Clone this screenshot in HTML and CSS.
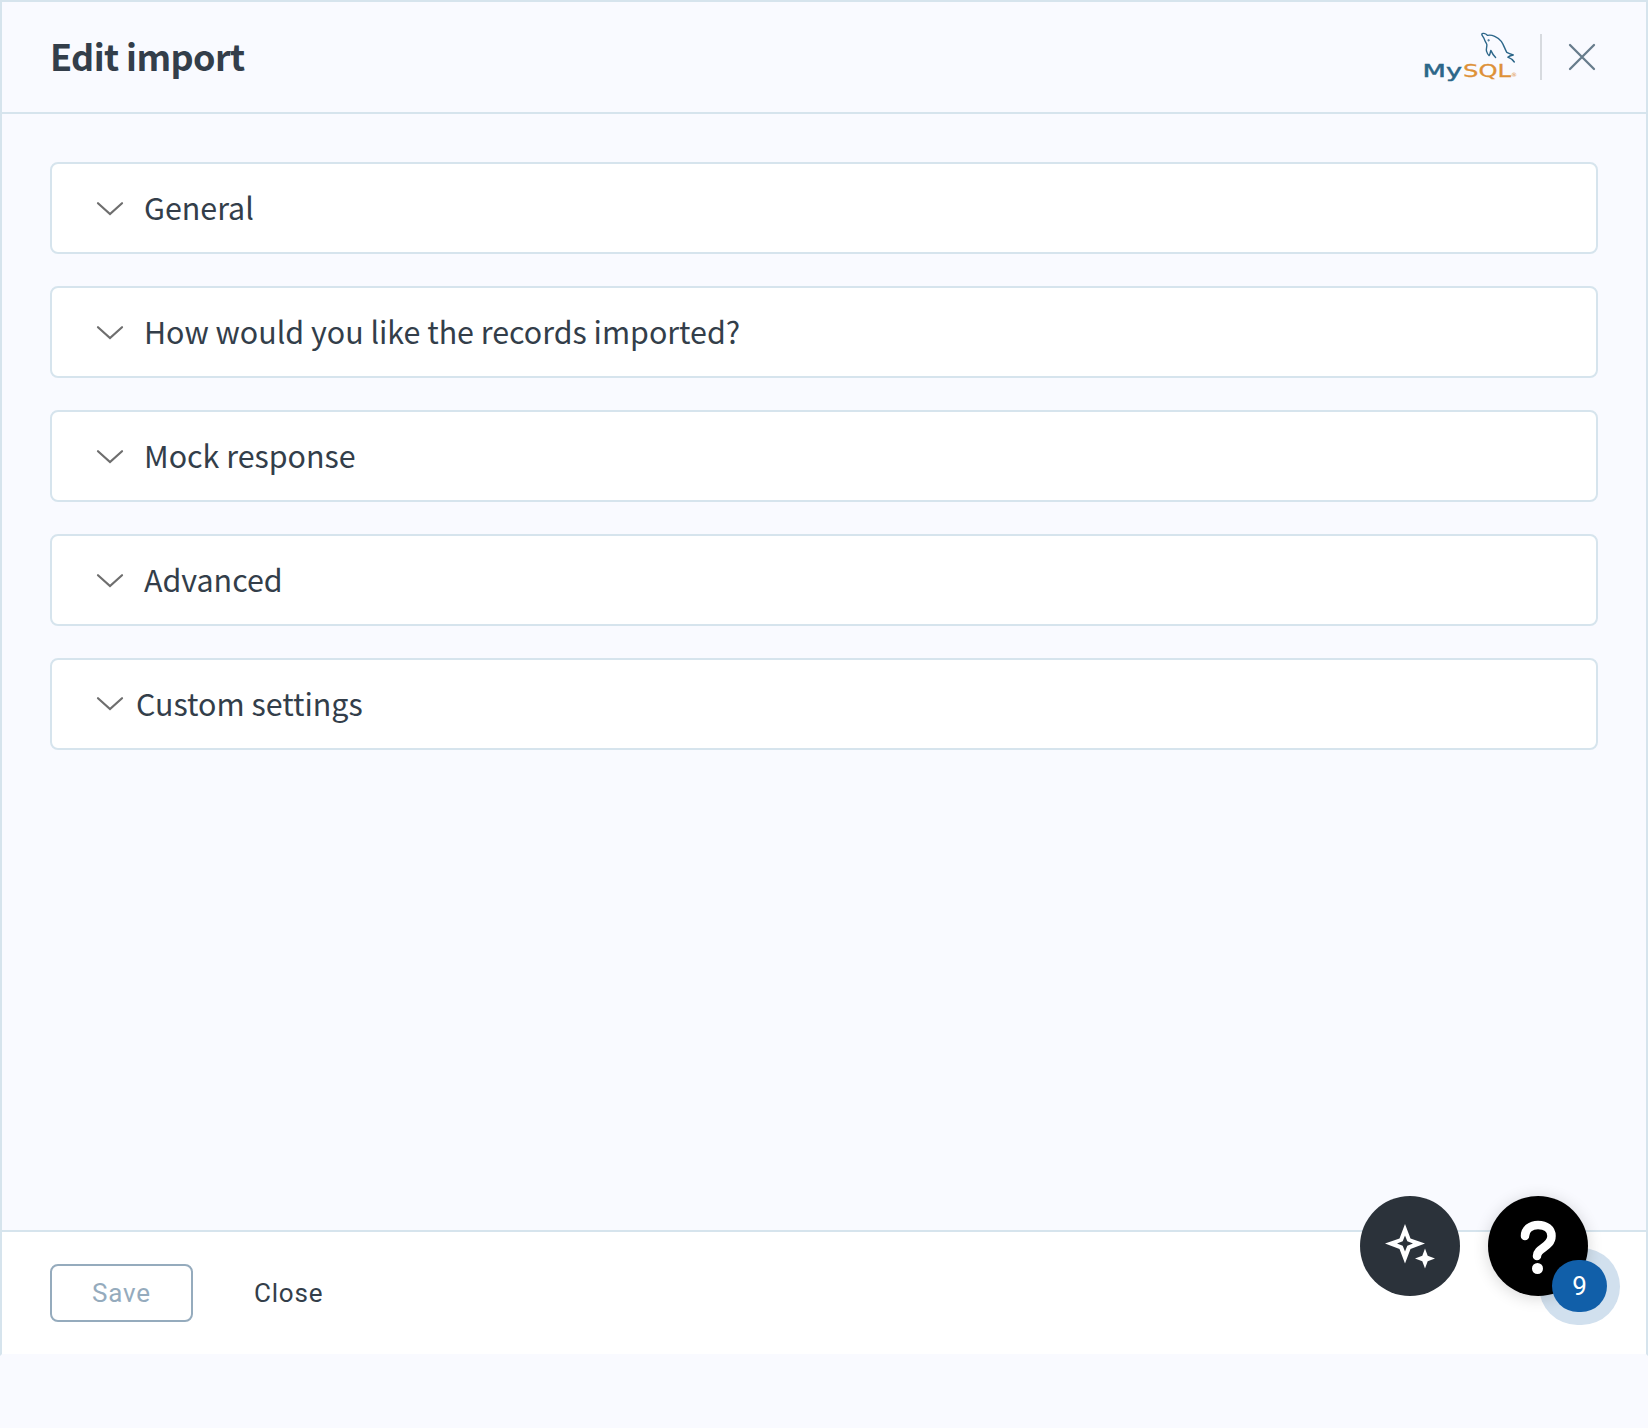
FILE: index.html
```html
<!DOCTYPE html>
<html lang="en">
<head>
<meta charset="utf-8">
<title>Edit import</title>
<link rel="stylesheet" href="styles.css">
</head>
<body>
<svg width="0" height="0" class="defs" aria-hidden="true">
  <symbol id="chevron" viewBox="0 0 28 16"><path d="M2 2.2 14 13l12-10.8" fill="none" stroke="currentColor" stroke-width="2.2" stroke-linecap="round"/></symbol>
</svg>
<div class="drawer">
  <header class="header">
    <h1 class="title">Edit import</h1>
    <svg class="logo" viewBox="0 0 96 52" role="img" aria-label="MySQL">
      <g transform="translate(-.7 2.500)" fill="none" stroke="#2c6689" stroke-width="1.4" stroke-linejoin="round" stroke-linecap="round">
        <path d="M91 28.500c-1.500-2-3.500-3.700-6.500-4.800 1.200-1.200 3.200-1.700 5.500-2.200-2.500-.8-4.500-1.500-6.500-2.600-2-3.500-3-7.500-5.500-11-3.500-4.500-9.500-7-13.700-6-2.500-2.500-5.500-2.500-5.800-1.200 0 1.500 2 3 2.500 5 .5 2 1.800 3 2.500 5.200.5 2.500-1.200 4.500-.2 7 .6 2 1.300 3.500 2.500 4.200 1.200-1.500 1-3 1.700-5.200 1.300 3 2.800 5 4.800 7"/>
        <circle cx="65.300" cy="6.800" r=".4"/>
      </g>
      <text class="logo-my" x="-1.500" y="45.500" textLength="39.5" lengthAdjust="spacingAndGlyphs">My</text>
      <text class="logo-sql" x="39" y="45.500" textLength="48" lengthAdjust="spacingAndGlyphs">SQL</text>
      <text class="logo-mark" x="87" y="45.500">®</text>
    </svg>
    <span class="divider"></span>
    <svg class="close-icon" viewBox="0 0 28 28"><path d="m2 2 24 24M26 2 2 26" stroke="currentColor" stroke-width="2.300" stroke-linecap="round"/></svg>
  </header>
  <main class="content">
    <section class="panel"><svg class="chevron"><use href="#chevron"/></svg><span class="panel-title">General</span></section>
    <section class="panel"><svg class="chevron"><use href="#chevron"/></svg><span class="panel-title">How would you like the records imported?</span></section>
    <section class="panel"><svg class="chevron"><use href="#chevron"/></svg><span class="panel-title">Mock response</span></section>
    <section class="panel"><svg class="chevron"><use href="#chevron"/></svg><span class="panel-title">Advanced</span></section>
    <section class="panel panel-tight"><svg class="chevron"><use href="#chevron"/></svg><span class="panel-title">Custom settings</span></section>
  </main>
  <footer class="footer">
    <button class="button save" disabled>Save</button>
    <button class="button close">Close</button>
  </footer>
</div>
<div class="halo"></div>
<div class="fab assistant">
  <svg viewBox="0 0 100 100"><path fill="#fff" fill-rule="evenodd" d="M45 28 50.500 42.500 65 47.500 50.500 53 45 67.500 39.500 53 25 47.500 39.500 42.500ZM45 39.500 42.700 45.200 37 47.500 42.700 49.800 45 55.500 47.300 49.800 53 47.500 47.300 45.200Z"/><path fill="#fff" d="m65 52.500 2.700 7.300 7.300 2.700-7.300 2.700L65 72.500l-2.700-7.300-7.300-2.700 7.300-2.700Z"/></svg>
</div>
<div class="fab help">
  <svg viewBox="0 0 100 100"><path d="M37 40c0-7 6-11 13-11 8 0 13.500 4 13.500 11 0 11-14.500 12-14.500 20" fill="none" stroke="#fff" stroke-width="8.500" stroke-linecap="round"/><circle cx="49.500" cy="72.500" r="5.500" fill="#fff"/></svg>
</div>
<div class="badge">9</div>
</body>
</html>
```
FILE: styles.css
```css
* { box-sizing: border-box; }
body {
  margin: 0;
  height: 1428px;
  position: relative;
  overflow: hidden;
  background: #f9faff;
  color: #333e4a;
  font-family: "Noto Sans CJK SC", sans-serif;
}
.defs { position: absolute; }
.drawer {
  height: 1356px;
  display: flex;
  flex-direction: column;
  border: 2px solid #d6e4ed;
  border-bottom-color: #f9faff;
}
.header {
  height: 112px;
  flex: none;
  display: flex;
  align-items: center;
  padding: 0 50px 0 48px;
  border-bottom: 2px solid #d6e4ed;
}
.title {
  margin: 0 auto 0 0;
  padding-bottom: 5px;
  font-size: 36px;
  line-height: 52px;
  font-weight: 600;
  letter-spacing: -.62px;
}
.logo { width: 96px; height: 52px; overflow: visible; margin-right: 20px; }
.logo text { font-family: "DejaVu Sans", sans-serif; font-size: 18.5px; }
.logo .logo-my { fill: #2c6689; stroke: #2c6689; stroke-width: .5; }
.logo .logo-sql { fill: #de9138; stroke: #de9138; stroke-width: .3; }
.logo .logo-mark { fill: #de9138; font-size: 6px; }
.divider { width: 2px; height: 46px; background: #d7dadf; margin-right: 26px; }
.close-icon { width: 28px; height: 28px; color: #677c8c; }
.content {
  flex: 1;
  padding: 48px;
  display: flex;
  flex-direction: column;
  gap: 32px;
}
.panel {
  height: 92px;
  flex: none;
  display: flex;
  align-items: center;
  gap: 20px;
  padding-left: 44px;
  background: #fff;
  border: 2px solid #d6e4ed;
  border-radius: 8px;
}
.panel-tight { gap: 12px; }
.chevron { width: 28px; height: 16px; margin-top: 2px; color: #6e6e6e; }
.panel-tight .chevron { margin-top: 0; }
.panel-title { padding-bottom: 2px; font-size: 30.4px; line-height: 46px; white-space: nowrap; }
.footer {
  height: 124px;
  flex: none;
  display: flex;
  align-items: center;
  gap: 61px;
  padding: 0 48px;
  background: #fff;
  border-top: 2px solid #d6e4ed;
}
.button {
  height: 58px;
  padding: 0;
  border: 0;
  background: none;
  font: 26px Roboto, sans-serif;
  letter-spacing: .8px;
  color: #333e4a;
}
.save {
  width: 143px;
  border: 2px solid #95abbd;
  border-radius: 8px;
  color: #95abbd;
}
.fab {
  position: absolute;
  top: 1196px;
  width: 100px;
  height: 100px;
  border-radius: 50%;
}
.fab svg { display: block; }
.assistant { left: 1360px; background: #2b323a; }
.help { left: 1488px; background: #000; box-shadow: 0 2px 16px rgba(0, 0, 0, .16); }
.halo {
  position: absolute;
  left: 1539px;
  top: 1248px;
  width: 81px;
  height: 77px;
  border-radius: 39px;
  background: #d1e0ee;
}
.badge {
  position: absolute;
  left: 1552px;
  top: 1260px;
  width: 55px;
  height: 52px;
  border-radius: 26px;
  background: #115fa9;
  color: #fff;
  font: 26px/52px Roboto, sans-serif;
  text-align: center;
}
```
